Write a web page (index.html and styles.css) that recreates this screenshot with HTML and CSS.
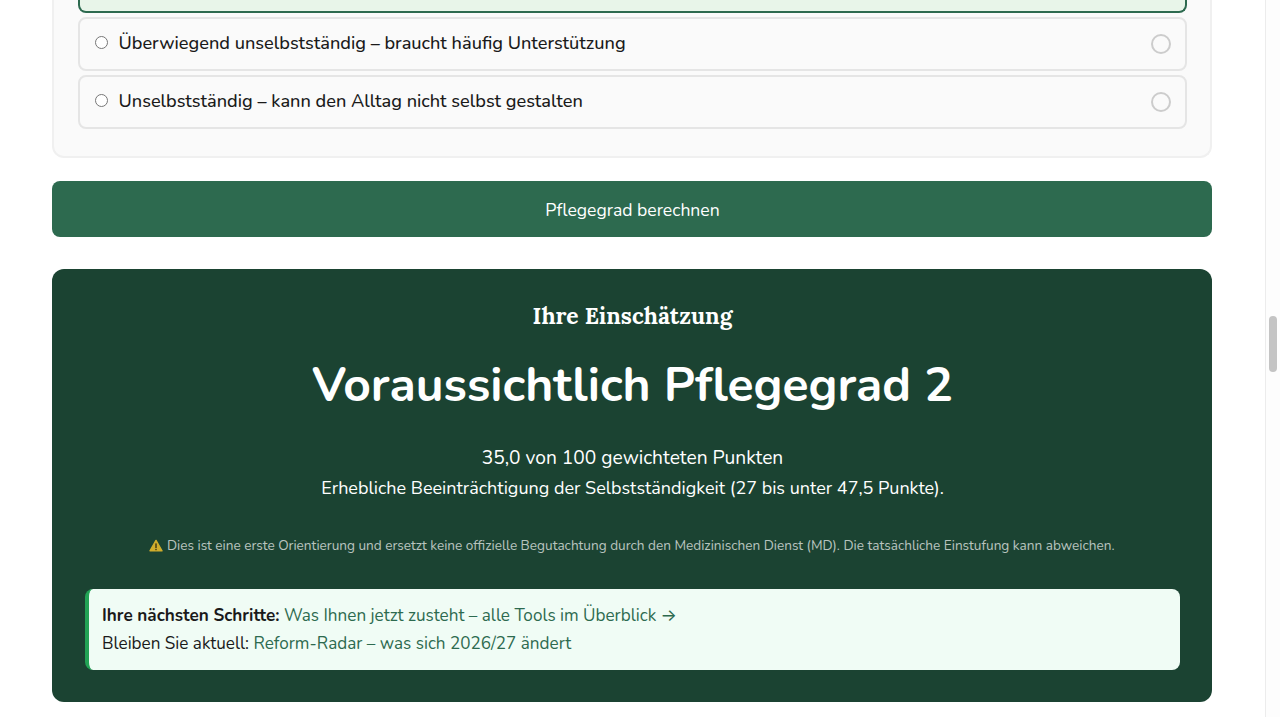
FILE: index.html
```html
<!DOCTYPE html>
<html lang="de">
<head>
<meta charset="utf-8">
<title>Pflegegrad</title>
<link rel="stylesheet" href="styles.css">
</head>
<body>
<div class="viewport">
  <main class="page">
    <section class="card">
      <div class="option selected"></div>
      <label class="option">
        <input type="radio" name="q" class="radio">
        <span class="option-text">Überwiegend unselbstständig – braucht häufig Unterstützung</span>
        <span class="mark"></span>
      </label>
      <label class="option">
        <input type="radio" name="q" class="radio">
        <span class="option-text">Unselbstständig – kann den Alltag nicht selbst gestalten</span>
        <span class="mark"></span>
      </label>
    </section>
    <button class="submit" type="button">Pflegegrad berechnen</button>
    <section class="result">
      <h3 class="result-title">Ihre Einschätzung</h3>
      <div class="result-grade">Voraussichtlich Pflegegrad 2</div>
      <p class="result-points">35,0 von 100 gewichteten Punkten</p>
      <p class="result-desc">Erhebliche Beeinträchtigung der Selbstständigkeit (27 bis unter 47,5 Punkte).</p>
      <p class="result-note"><svg class="warn" viewBox="0 0 14 13" width="14" height="13" aria-hidden="true"><path d="M7 1.4 13 11.8H1Z" fill="#d0ad2c" stroke="#d0ad2c" stroke-width="1.4" stroke-linejoin="round"/><rect x="6.3" y="4.4" width="1.4" height="4.6" fill="#3a3413"/><rect x="6.3" y="9.8" width="1.4" height="1.4" fill="#3a3413"/></svg> Dies ist eine erste Orientierung und ersetzt keine offizielle Begutachtung durch den Medizinischen Dienst (MD). Die tatsächliche Einstufung kann abweichen.</p>
      <div class="next">
        <p class="next-line"><strong>Ihre nächsten Schritte:</strong> <a href="#">Was Ihnen jetzt zusteht – alle Tools im Überblick <span class="arrow">→</span></a></p>
        <p class="next-line">Bleiben Sie aktuell: <a href="#">Reform-Radar – was sich 2026/27 ändert</a></p>
      </div>
    </section>
  </main>
  <div class="scrollbar"><div class="thumb"></div></div>
</div>
</body>
</html>
```
FILE: styles.css
```css
* { box-sizing: border-box; }
html, body { margin: 0; height: 717px; overflow: hidden; background: #fff; }
body { font-family: "Nunito", "Open Sans", "Noto Sans", sans-serif; color: #1a1a1a; }
.viewport { display: flex; height: 717px; }
.page { flex: 1; padding: 0 53px 0 52px; min-width: 0; }
.card {
  background: #fafafa;
  border: 2px solid #f0f0f0;
  border-top: 0;
  border-radius: 0 0 12px 12px;
  padding: 0 23px 27px 24px;
  display: flex;
  flex-direction: column;
  gap: 4px;
}
.option {
  display: flex;
  align-items: center;
  height: 54px;
  padding: 0 14px 0 15px;
  background: #fafafa;
  border: 2px solid #e5e5e5;
  border-radius: 8px;
}
.option.selected {
  height: 13px;
  background: #e8f5e9;
  border: 2px solid #2d6a4f;
  border-top: 0;
  border-radius: 0 0 8px 8px;
}
.radio { width: 13px; height: 13px; margin: 0 10.5px 3px 0; flex: none; }
.option-text { flex: 1; font-size: 18.15px; font-weight: 500; line-height: 24px; padding-bottom: 2px; }
.mark { width: 20px; height: 20px; border: 2px solid #ccc; border-radius: 50%; flex: none; }
.submit {
  display: block;
  width: 100%;
  height: 56px;
  margin-top: 23px;
  padding: 1px 0 0 1px;
  border: 0;
  border-radius: 8px;
  background: #2d6a4f;
  color: #fff;
  font: inherit;
  font-size: 17.6px;
}
.result {
  margin-top: 32px;
  height: 433px;
  padding: 32px 32px 32px 33px;
  background: #1b4332;
  border-radius: 12px;
  color: #fff;
  text-align: center;
}
.result-title {
  margin: 0;
  font-family: "Lora", "Liberation Serif", serif;
  font-size: 22.85px;
  font-weight: 700;
  line-height: 30px;
}
.result-grade { margin-top: 18px; font-size: 48px; font-weight: 700; line-height: 72px; }
.result-points { margin: 22px 0 0; font-size: 19.2px; line-height: 30px; }
.result-desc { margin: 0; font-size: 18px; line-height: 30px; }
.result-note { margin: 31px 0 0; padding-right: 1px; font-size: 13.6px; line-height: 24px; color: rgba(255,255,255,.7); }
.warn { vertical-align: -1.5px; }
.next {
  margin: 31px 0 0;
  height: 81px;
  padding: 12px 14px 12px 13px;
  background: #f0fcf5;
  border-left: 4px solid #22a355;
  border-radius: 8px;
  text-align: left;
  color: #1a1a1a;
}
.next-line { margin: 0; font-size: 17.12px; line-height: 28px; }
.next a { color: #2d6a4f; text-decoration: none; }
.arrow { font-family: "Inter", "Noto Sans", sans-serif; }
.scrollbar { width: 15px; flex: none; background: #fdfdfd; border-left: 1px solid #ececec; padding: 316px 0 0 3px; }
.thumb { width: 8px; height: 56px; background: #c4c4c4; border-radius: 4px; }
```
